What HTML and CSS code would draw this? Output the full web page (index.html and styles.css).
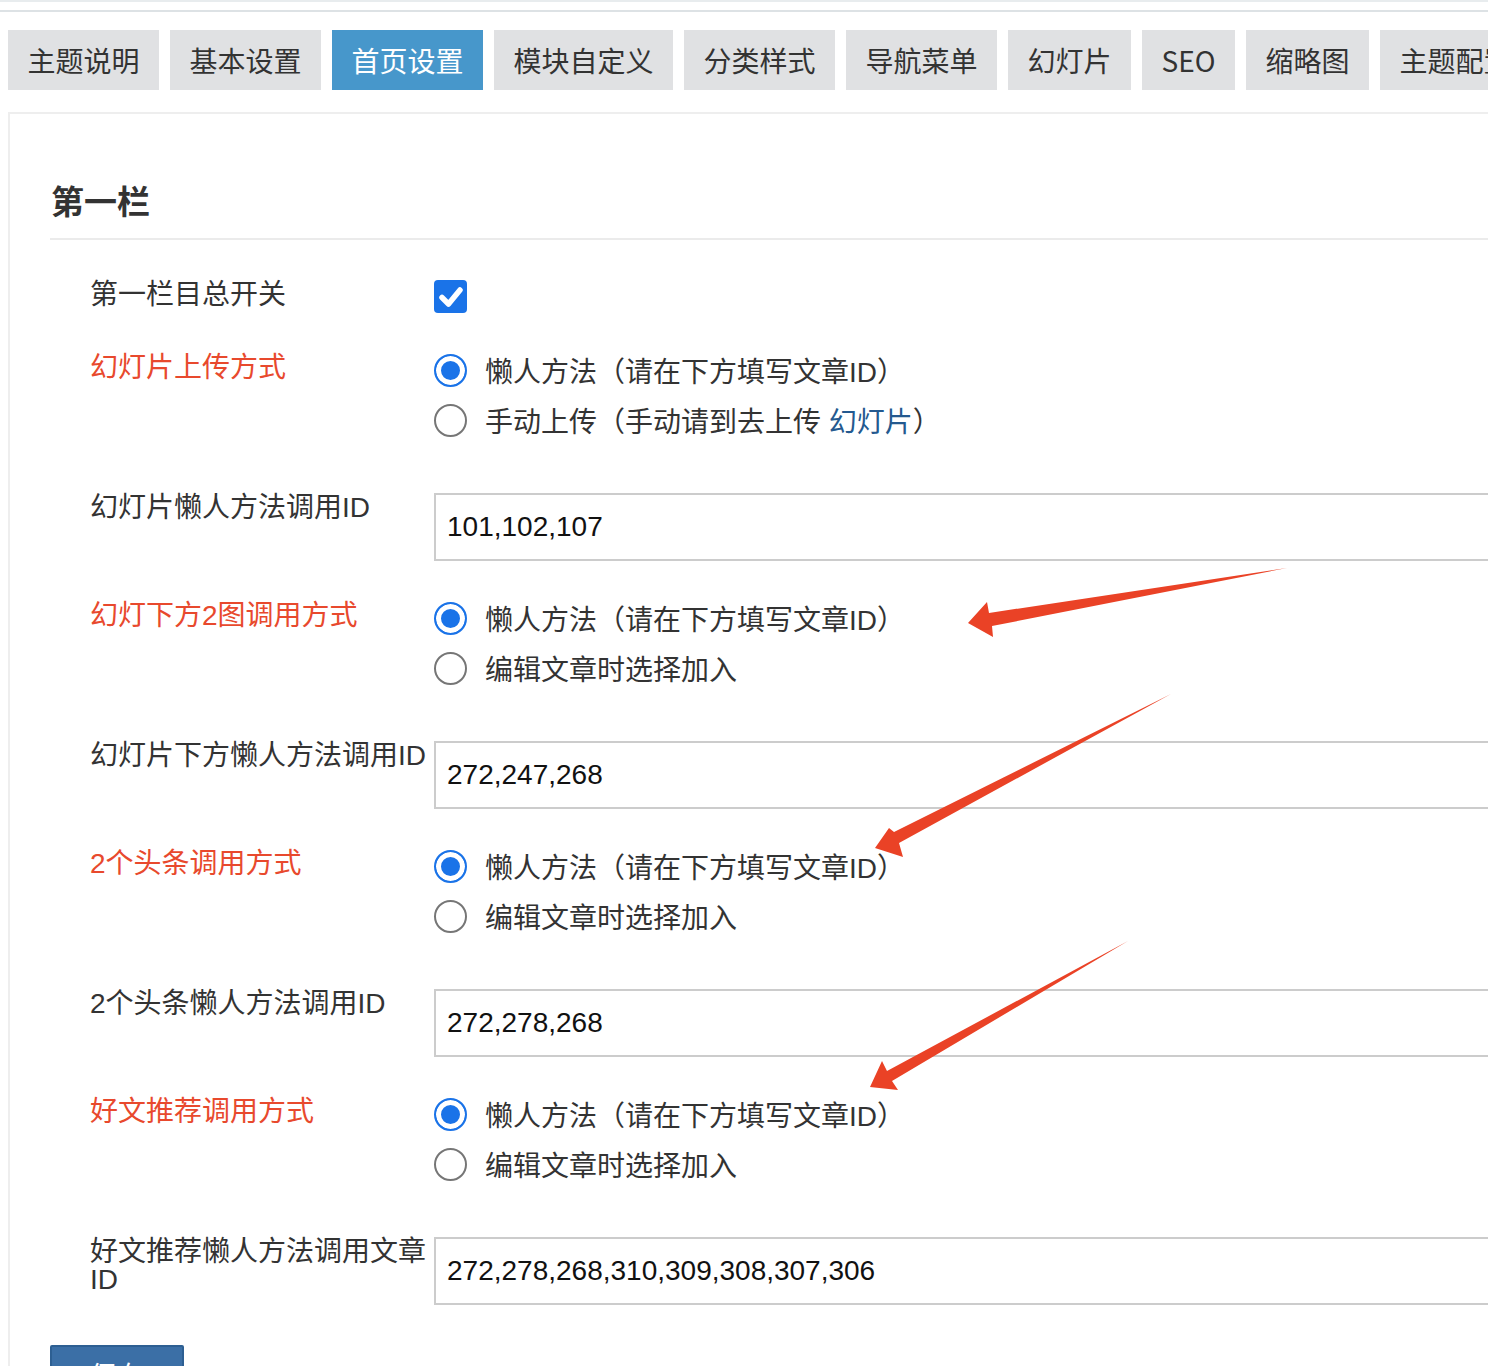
FILE: index.html
```html
<!DOCTYPE html>
<html lang="zh-CN">
<head>
<meta charset="utf-8">
<title>首页设置</title>
<link rel="stylesheet" href="styles.css">
</head>
<body>
<div class="page">
  <div class="topline"></div>
  <div class="topline second"></div>
  <nav class="tabs">
    <span class="tab">主题说明</span>
    <span class="tab">基本设置</span>
    <span class="tab active">首页设置</span>
    <span class="tab">模块自定义</span>
    <span class="tab">分类样式</span>
    <span class="tab">导航菜单</span>
    <span class="tab">幻灯片</span>
    <span class="tab">SEO</span>
    <span class="tab">缩略图</span>
    <span class="tab">主题配置</span>
  </nav>

  <section class="panel">
    <h2 class="section-title">第一栏</h2>
    <div class="form">
      <div class="row">
        <div class="label">第一栏目总开关</div>
        <div class="control">
          <span class="checkbox"><svg viewBox="0 0 33 33" width="33" height="33"><path d="M8 17.5 L14.5 24 L26 10" fill="none" stroke="#fff" stroke-width="5.5" stroke-linecap="round" stroke-linejoin="round"/></svg></span>
        </div>
      </div>

      <div class="row">
        <div class="label red">幻灯片上传方式</div>
        <div class="control">
          <div class="option"><span class="radio checked"></span><span>懒人方法（请在下方填写文章ID）</span></div>
          <div class="option"><span class="radio"></span><span>手动上传（手动请到去上传 <a class="link">幻灯片</a>）</span></div>
        </div>
      </div>

      <div class="row">
        <div class="label">幻灯片懒人方法调用ID</div>
        <div class="control"><input class="text-input" type="text" value="101,102,107"></div>
      </div>

      <div class="row">
        <div class="label red">幻灯下方2图调用方式</div>
        <div class="control">
          <div class="option"><span class="radio checked"></span><span>懒人方法（请在下方填写文章ID）</span></div>
          <div class="option"><span class="radio"></span><span>编辑文章时选择加入</span></div>
        </div>
      </div>

      <div class="row">
        <div class="label">幻灯片下方懒人方法调用ID</div>
        <div class="control"><input class="text-input" type="text" value="272,247,268"></div>
      </div>

      <div class="row">
        <div class="label red">2个头条调用方式</div>
        <div class="control">
          <div class="option"><span class="radio checked"></span><span>懒人方法（请在下方填写文章ID）</span></div>
          <div class="option"><span class="radio"></span><span>编辑文章时选择加入</span></div>
        </div>
      </div>

      <div class="row">
        <div class="label">2个头条懒人方法调用ID</div>
        <div class="control"><input class="text-input" type="text" value="272,278,268"></div>
      </div>

      <div class="row">
        <div class="label red">好文推荐调用方式</div>
        <div class="control">
          <div class="option"><span class="radio checked"></span><span>懒人方法（请在下方填写文章ID）</span></div>
          <div class="option"><span class="radio"></span><span>编辑文章时选择加入</span></div>
        </div>
      </div>

      <div class="row">
        <div class="label">好文推荐懒人方法调用文章ID</div>
        <div class="control"><input class="text-input" type="text" value="272,278,268,310,309,308,307,306"></div>
      </div>
    </div>
    <button class="save" type="button">保存</button>
  </section>

  <svg class="annotations" width="1488" height="1366" viewBox="0 0 1488 1366">
    <polygon class="arrow" points="968,623 987,602 989,613 1287,568 992,626 993,637"/>
    <polygon class="arrow" points="875,848 889,828 894,832 1171,694 899,843 903,857"/>
    <polygon class="arrow" points="870,1087 882,1061 887,1071 1128,941 892,1081 898,1090"/>
  </svg>
</div>
</body>
</html>
```

FILE: styles.css
```css
html, body {
  margin: 0;
  padding: 0;
  overflow: hidden;
  background: #fff;
}

body {
  font-family: "Liberation Sans", "Noto Sans CJK SC", sans-serif;
  color: #333;
}

.page {
  position: relative;
  width: 1700px;
  height: 1366px;
  overflow: hidden;
}

.topline {
  height: 2px;
  background: #e8ecee;
}

.topline.second {
  margin-top: 8px;
  background: #dde2e5;
}

.tabs {
  display: flex;
  gap: 11px;
  margin-top: 18px;
  padding-left: 8px;
  height: 60px;
}

.tab {
  flex-shrink: 0;
  display: flex;
  align-items: center;
  height: 60px;
  padding: 0 19.5px;
  background: #e0e1e3;
  color: #333;
  font-family: "Noto Sans CJK SC", sans-serif;
  font-size: 28px;
  white-space: nowrap;
}

.tab.active {
  background: #4797cb;
  color: #fff;
}

.panel {
  margin: 22px 0 0 8px;
  border-top: 2px solid #eeeeee;
  border-left: 2px solid #eeeeee;
  padding: 66px 0 0 40px;
}

.section-title {
  margin: 0;
  font-family: "Noto Sans CJK SC", sans-serif;
  font-size: 33px;
  line-height: 40px;
  font-weight: bold;
  color: #333;
  padding: 0 0 18px 1px;
  border-bottom: 2px solid #ebebeb;
}

.form {
  margin: 40px 0 0 40px;
}

.row {
  display: grid;
  grid-template-columns: 344px 1fr;
  align-items: start;
  margin-bottom: 40px;
}

.label {
  font-size: 28px;
  line-height: 28px;
  padding: 1px 6px 1px 0;
  color: #333;
}

.label.red {
  color: #e8492d;
}

.control {
  display: flex;
  flex-direction: column;
  align-items: flex-start;
}

.checkbox {
  width: 33px;
  height: 33px;
  border-radius: 4px;
  background: #1a73e8;
  display: block;
}

.checkbox svg {
  display: block;
}

.option {
  display: flex;
  align-items: center;
  gap: 18px;
  height: 34px;
  margin-bottom: 16px;
  font-size: 28px;
  color: #333;
  white-space: nowrap;
}

.radio {
  box-sizing: border-box;
  width: 33px;
  height: 33px;
  border-radius: 50%;
  border: 2px solid #767676;
  background: #fff;
  flex-shrink: 0;
}

.radio.checked {
  border: 2px solid #1a73e8;
  background: #1a73e8;
  box-shadow: inset 0 0 0 5px #fff;
}

.link {
  color: #24598f;
  text-decoration: none;
}

.text-input {
  box-sizing: border-box;
  width: 1200px;
  height: 68px;
  margin: 0;
  border: 2px solid #cccccc;
  border-radius: 0;
  padding: 0 11px;
  font-family: "Liberation Sans", sans-serif;
  font-size: 28px;
  color: #111;
  background: #fff;
  outline: none;
}

.save {
  display: block;
  width: 134px;
  height: 60px;
  margin: 0;
  border: 2px solid #2d5f92;
  border-radius: 2px;
  background: #3b6fa6;
  color: #fff;
  font-family: "Noto Sans CJK SC", sans-serif;
  font-size: 28px;
  line-height: 1;
}

.annotations {
  position: absolute;
  top: 0;
  left: 0;
  pointer-events: none;
}

.arrow {
  fill: #ea4226;
}
```
